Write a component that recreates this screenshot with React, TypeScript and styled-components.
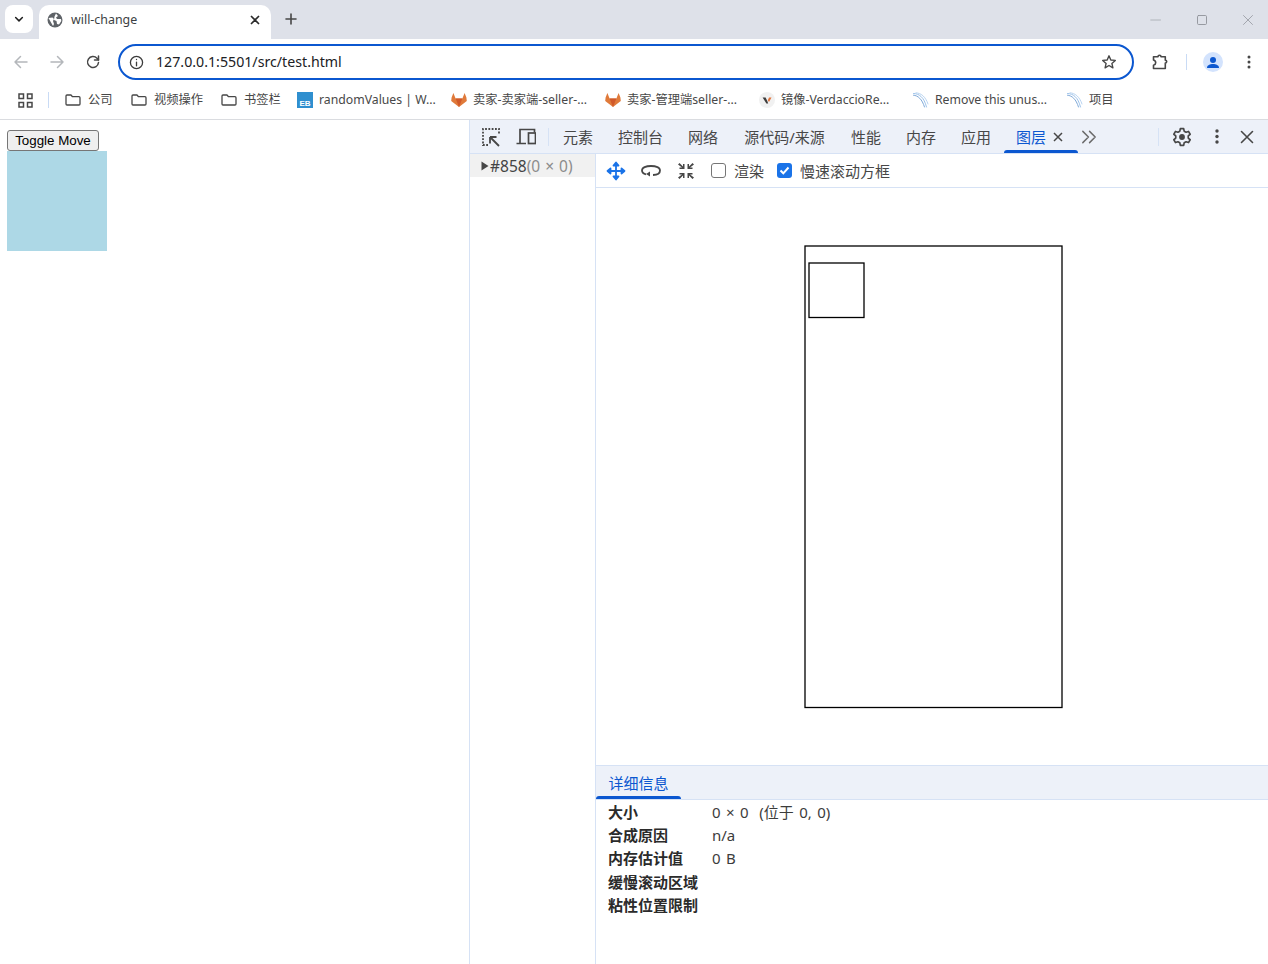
import styled, { createGlobalStyle } from "styled-components";
import { ReactNode } from "react";

const UI_FONT = `"Noto Sans", "Noto Sans CJK SC", sans-serif`;

const GlobalStyle = createGlobalStyle`
  html, body { margin: 0; padding: 0; background: #fff; }
  * { box-sizing: border-box; }
  body { font-family: ${UI_FONT}; overflow: hidden; }
`;

const Shell = styled.div`
  width: 1268px;
  height: 964px;
  display: flex;
  flex-direction: column;
  overflow: hidden;
`;

/* ---- tab strip ---- */
const TabStrip = styled.div`
  height: 39px;
  flex: none;
  background: #dee1e9;
  display: flex;
  align-items: flex-end;
  padding-left: 5px;
`;
const TabSearch = styled.div`
  width: 28px;
  height: 28px;
  margin-bottom: 6px;
  background: #fff;
  border-radius: 8px;
  display: flex;
  align-items: center;
  justify-content: center;
`;
const Tab = styled.div`
  width: 232px;
  height: 34px;
  margin-left: 6px;
  background: #fff;
  border-radius: 10px 10px 0 0;
  display: flex;
  align-items: center;
  padding: 0 9px 5px 8px;
  gap: 8px;
`;
const TabTitle = styled.span`
  flex: 1;
  font-size: 12.4px;
  line-height: 18px;
  color: #3c3f43;
`;
const NewTab = styled.div`
  width: 28px;
  height: 28px;
  margin: 0 0 6px 6px;
  display: flex;
  align-items: center;
  justify-content: center;
`;
const WindowControls = styled.div`
  margin-left: auto;
  margin-right: -3px;
  height: 39px;
  display: flex;
  align-items: center;
`;
const WindowButton = styled.div`
  width: 46px;
  height: 39px;
  display: flex;
  align-items: center;
  justify-content: center;
`;

/* ---- toolbar ---- */
const Toolbar = styled.div`
  height: 44px;
  flex: none;
  background: #fff;
  display: flex;
  align-items: center;
  padding: 2px 0 0 3px;
  border-radius: 8px 8px 0 0;
`;
const NavButton = styled.div<{ $w?: number }>`
  width: ${(p) => p.$w ?? 36}px;
  height: 36px;
  flex: none;
  display: flex;
  align-items: center;
  justify-content: center;
`;
const Omnibox = styled.div`
  width: 1016px;
  height: 36px;
  flex: none;
  margin-left: 7px;
  border: 2px solid #0b57d0;
  border-radius: 18px;
  display: flex;
  align-items: center;
  padding: 0 15px 0 9px;
`;
const UrlText = styled.span`
  flex: 1;
  margin-left: 12px;
  font-size: 14.2px;
  line-height: 20px;
  color: #202124;
`;
const ToolDivider = styled.div`
  width: 1px;
  height: 16px;
  flex: none;
  background: #c9dbf5;
  margin-right: 8px;
`;
const Avatar = styled.div`
  width: 20px;
  height: 20px;
  border-radius: 50%;
  background: #d3e3fd;
  display: flex;
  align-items: center;
  justify-content: center;
  overflow: hidden;
`;

/* ---- bookmarks ---- */
const BookmarkBar = styled.div`
  height: 37px;
  flex: none;
  background: #fff;
  border-bottom: 1px solid #dadce0;
  display: flex;
  align-items: center;
  padding: 0 0 2px 18px;
`;
const BarDivider = styled.div`
  width: 1px;
  height: 16px;
  background: #c9dbf5;
  margin: 0 16px 0 15px;
`;
const Bookmark = styled.div<{ $gap?: number; $w: number }>`
  width: ${(p) => p.$w}px;
  display: flex;
  align-items: center;
  gap: ${(p) => p.$gap ?? 6}px;
  flex: none;
`;
const BookmarkLabel = styled.span`
  font-size: 12.25px;
  line-height: 16px;
  color: #474747;
  white-space: nowrap;
`;
const EbIcon = styled.div`
  width: 16px;
  height: 16px;
  background: #2f8fcf;
  color: #fff;
  font: 700 8px/9px "Liberation Sans", sans-serif;
  display: flex;
  align-items: flex-end;
  justify-content: center;
`;

/* ---- content ---- */
const Content = styled.div`
  flex: 1;
  display: flex;
  min-height: 0;
`;
const Page = styled.div`
  width: 469px;
  flex: none;
  padding: 10px 7px;
  background: #fff;
`;
const ToggleButton = styled.button`
  display: block;
  width: 92px;
  height: 21px;
  padding: 0 0 1px;
  font: 13.33px/15px "Liberation Sans", Arial, sans-serif;
  color: #000;
  background: #efefef;
  border: 1px solid #767676;
  border-radius: 3px;
`;
const BlueBox = styled.div`
  width: 100px;
  height: 100px;
  background: lightblue;
`;

/* ---- devtools ---- */
const DevTools = styled.div`
  flex: 1;
  display: flex;
  flex-direction: column;
  border-left: 1px solid #d6e2f5;
  min-width: 0;
`;
const DevTabs = styled.div`
  height: 34px;
  flex: none;
  background: #edf1f9;
  border-bottom: 1px solid #d6e2f5;
  display: flex;
  align-items: center;
  padding-left: 3px;
`;
const DevIcon = styled.div<{ $w?: number }>`
  width: ${(p) => p.$w ?? 35}px;
  height: 33px;
  flex: none;
  display: flex;
  align-items: center;
  justify-content: center;
`;
const DevDivider = styled.div<{ $ml: number; $mr: number }>`
  width: 1px;
  height: 18px;
  flex: none;
  background: #d6e2f5;
  margin-left: ${(p) => p.$ml}px;
  margin-right: ${(p) => p.$mr}px;
`;
const DevTab = styled.div<{ $active?: boolean; $w?: number }>`
  position: relative;
  height: 33px;
  flex: none;
  width: ${(p) => (p.$w ? `${p.$w}px` : "auto")};
  padding: 0 12.5px;
  display: flex;
  align-items: center;
  justify-content: center;
  font-size: 15px;
  line-height: 20px;
  color: ${(p) => (p.$active ? "#0b57d0" : "#474747")};
  &::after {
    content: "";
    display: ${(p) => (p.$active ? "block" : "none")};
    position: absolute;
    left: 0;
    right: 0;
    bottom: 0;
    height: 3px;
    border-radius: 3px 3px 0 0;
    background: #0b57d0;
  }
`;
const TabClose = styled.span`
  display: flex;
  margin-left: 5px;
`;
const Panels = styled.div`
  flex: 1;
  display: flex;
  min-height: 0;
`;
const LayerTree = styled.div`
  width: 126px;
  flex: none;
  border-right: 1px solid #d6e2f5;
`;
const TreeRow = styled.div`
  height: 23px;
  background: #f1f1f1;
  display: flex;
  align-items: center;
  padding-left: 11px;
  font-size: 15.5px;
  line-height: 20px;
  color: #444;
  white-space: pre;
`;
const TreeArrow = styled.span`
  display: flex;
  margin-right: 1px;
`;
const TreeDim = styled.span`
  color: #8c8c8c;
  word-spacing: 1px;
`;
const LayerMain = styled.div`
  flex: 1;
  display: flex;
  flex-direction: column;
  min-width: 0;
`;
const LayerTools = styled.div`
  height: 34px;
  flex: none;
  border-bottom: 1px solid #d6e2f5;
  display: flex;
  align-items: center;
  padding-left: 2px;
`;
const ToolIcon = styled.div`
  width: 35px;
  height: 33px;
  flex: none;
  display: flex;
  align-items: center;
  justify-content: center;
`;
const CheckLabel = styled.label<{ $ml: number }>`
  display: flex;
  align-items: center;
  margin-left: ${(p) => p.$ml}px;
  gap: 8px;
  font-size: 15px;
  line-height: 20px;
  color: #474747;
`;
const CheckBox = styled.span<{ $on?: boolean }>`
  width: 15px;
  height: 15px;
  border-radius: 3px;
  border: ${(p) => (p.$on ? "none" : "1px solid #767676")};
  background: ${(p) => (p.$on ? "#1a73e8" : "#fff")};
  display: flex;
  align-items: center;
  justify-content: center;
`;
const Canvas = styled.div`
  flex: 1;
  display: flex;
  align-items: center;
  justify-content: center;
  padding-left: 3px;
  min-height: 0;
`;
const DetailTabs = styled.div`
  height: 35px;
  flex: none;
  background: #edf1f9;
  border-top: 1px solid #d6e2f5;
  border-bottom: 1px solid #d6e2f5;
  display: flex;
`;
const DetailTab = styled.div`
  position: relative;
  width: 85px;
  display: flex;
  align-items: center;
  justify-content: center;
  font-size: 15px;
  line-height: 20px;
  color: #0b57d0;
  &::after {
    content: "";
    position: absolute;
    left: 0;
    right: 0;
    bottom: 0;
    height: 3px;
    border-radius: 3px 3px 0 0;
    background: #0b57d0;
  }
`;
const DetailGrid = styled.div`
  height: 164px;
  flex: none;
  padding-left: 12px;
  display: grid;
  grid-template-columns: 104px 1fr;
  grid-auto-rows: 23.4px;
  align-items: center;
  font-size: 15px;
  line-height: 20px;
`;
const DetailKey = styled.div`
  font-weight: 700;
  color: #2b2b2b;
`;
const DetailValue = styled.div`
  color: #3c3c3c;
  white-space: pre;
  word-spacing: 1.5px;
`;

const Ico = ({ size = 16, children, sw = 1.5, color = "#474747" }: { size?: number; children: ReactNode; sw?: number; color?: string }) => (
  <svg width={size} height={size} viewBox="0 0 16 16" fill="none" stroke={color} strokeWidth={sw} strokeLinecap="round" strokeLinejoin="round">
    {children}
  </svg>
);

const FolderIcon = () => (
  <Ico size={16} sw={1.3}>
    <path d="M1 4a1 1 0 0 1 1-1h4l1.5 1.7H14a1 1 0 0 1 1 1V12a1 1 0 0 1-1 1H2a1 1 0 0 1-1-1z" />
  </Ico>
);

const FoxIcon = () => (
  <svg width="16" height="16" viewBox="0 0 16 16">
    <path d="M0.6 5.5 2.4 1 4.6 6.4H11.4L13.6 1 15.4 5.5 15.8 9 8 15 .2 9z" fill="#e07a3a" />
    <path d="M4.6 6.4H11.4L8 15z" fill="#d0592a" />
  </svg>
);

const WaveIcon = () => (
  <svg width="16" height="16" viewBox="0 0 16 16" fill="none" strokeLinecap="round">
    <path d="M0.5 1.5C6 1.5 11 5 13.5 15" stroke="#9cc2ea" strokeWidth="1" />
    <path d="M3 .8C8 1 12.5 4.5 15 12" stroke="#b9d4f1" strokeWidth="1" />
    <path d="M0.5 3.2C5 3.5 9 7 11.5 15" stroke="#7fa9d8" strokeWidth="1" />
  </svg>
);

const VerdaccioIcon = () => (
  <svg width="16" height="16" viewBox="0 0 16 16">
    <circle cx="8" cy="8" r="8" fill="#f1f1f1" />
    <path d="M3.6 5.5H6.6L8.3 9 9.2 11.5H7.4z" fill="#3c3c3c" />
    <path d="M8.8 8.2 10 5.5H12.5L10 10z" fill="#e2733a" />
  </svg>
);

const bookmarks = [
  { label: "公司", w: 66 },
  { label: "视频操作", w: 90 },
  { label: "书签栏", w: 76 },
];

const devTabs = [
  { label: "元素" },
  { label: "控制台" },
  { label: "网络" },
  { label: "源代码/来源", w: 108 },
  { label: "性能" },
  { label: "内存" },
  { label: "应用" },
];

const details: [string, string][] = [
  ["大小", "0 × 0  (位于 0, 0)"],
  ["合成原因", "n/a"],
  ["内存估计值", "0 B"],
  ["缓慢滚动区域", ""],
  ["粘性位置限制", ""],
];

function DetailRow({ name, value }: { name: string; value: string }) {
  return (
    <>
      <DetailKey>{name}</DetailKey>
      <DetailValue>{value}</DetailValue>
    </>
  );
}

export default function App() {
  return (
    <Shell>
      <GlobalStyle />
      <TabStrip>
        <TabSearch>
          <Ico size={12} sw={2} color="#1f1f1f">
            <path d="M3.5 6 8 10.5 12.5 6" />
          </Ico>
        </TabSearch>
        <Tab>
          <svg width="16" height="16" viewBox="0 0 16 16">
            <circle cx="8" cy="8" r="7.5" fill="#5f6368" />
            <path d="M1.5 6 5.5 5.5 7 7 6 9l1 3-1 2-2-3.5zM9 1.5 11 4 9 5.5 10 7h4l.3 2-2.3 3.5-2-.5-.5-3-2.5-1 .5-3.5z" fill="#fff" />
          </svg>
          <TabTitle>will-change</TabTitle>
          <Ico size={14} sw={2} color="#2b2b2b">
            <path d="M4 4l8 8M12 4l-8 8" />
          </Ico>
        </Tab>
        <NewTab>
          <Ico size={16} sw={1.6} color="#474747">
            <path d="M8 3v10M3 8h10" />
          </Ico>
        </NewTab>
        <WindowControls>
          <WindowButton>
            <Ico size={12} sw={1} color="#a2a5ab">
              <path d="M1 8h13" />
            </Ico>
          </WindowButton>
          <WindowButton>
            <Ico size={12} sw={1.2} color="#8f9299">
              <rect x="2" y="2" width="12" height="12" rx="1.5" />
            </Ico>
          </WindowButton>
          <WindowButton>
            <Ico size={12} sw={1} color="#8f9299">
              <path d="M2 2l12 12M14 2L2 14" />
            </Ico>
          </WindowButton>
        </WindowControls>
      </TabStrip>

      <Toolbar>
        <NavButton>
          <Ico sw={1.5} color="#b4b7bb">
            <path d="M14 8H2M7.5 2.5 2 8l5.5 5.5" />
          </Ico>
        </NavButton>
        <NavButton>
          <Ico sw={1.5} color="#b4b7bb">
            <path d="M2 8h12M8.5 2.5 14 8l-5.5 5.5" />
          </Ico>
        </NavButton>
        <NavButton>
          <Ico sw={1.5} color="#474747">
            <path d="M13.5 8.5a5.5 5.5 0 1 1-1.5-4.3L13.5 6" />
            <path d="M13.5 2v4h-4" />
          </Ico>
        </NavButton>
        <Omnibox>
          <Ico size={15} sw={1.4} color="#3c3c3c">
            <circle cx="8" cy="8" r="6.5" />
            <path d="M8 7.5V11.5M8 4.8v.1" />
          </Ico>
          <UrlText>127.0.0.1:5501/src/test.html</UrlText>
          <Ico size={16} sw={1.4} color="#474747">
            <path d="M8 1.8 9.8 6l4.5.4-3.4 3 1 4.4L8 11.5 4.1 13.8l1-4.4-3.4-3L6.2 6z" />
          </Ico>
        </Omnibox>
        <NavButton $w={52}>
          <svg width="16" height="16" viewBox="0 0 16 16" fill="none" stroke="#474747" strokeWidth="1.6" strokeLinejoin="round">
            <path d="M1.5 2.8H6a1.5 1.5 0 0 1 3 0h4.3V6.200a1.400 1.400 0 0 1 0 2.800v5.500H1.500V11.200c1.800-.5 2.200-1.300 2.200-2.500S3.300 6.500 1.500 6z" />
          </svg>
        </NavButton>
        <ToolDivider />
        <NavButton>
          <Avatar>
            <svg width="20" height="20" viewBox="0 0 20 20">
              <circle cx="10" cy="8" r="3" fill="#0b57d0" />
              <path d="M4 16c0-3 3-4 6-4s6 1 6 4z" fill="#0b57d0" />
            </svg>
          </Avatar>
        </NavButton>
        <NavButton>
          <svg width="4" height="14" viewBox="0 0 4 14">
            <circle cx="2" cy="2" r="1.5" fill="#474747" />
            <circle cx="2" cy="7" r="1.5" fill="#474747" />
            <circle cx="2" cy="12" r="1.5" fill="#474747" />
          </svg>
        </NavButton>
      </Toolbar>

      <BookmarkBar>
        <svg width="15" height="15" viewBox="0 0 15 15" fill="none" stroke="#474747" strokeWidth="1.5">
          <rect x="1" y="1" width="4.5" height="4.5" />
          <rect x="9.5" y="1" width="4.5" height="4.5" />
          <rect x="1" y="9.5" width="4.5" height="4.5" />
          <rect x="9.5" y="9.5" width="4.5" height="4.5" />
        </svg>
        <BarDivider />
        {bookmarks.map((b) => (
          <Bookmark key={b.label} $w={b.w} $gap={7}>
            <FolderIcon />
            <BookmarkLabel>{b.label}</BookmarkLabel>
          </Bookmark>
        ))}
        <Bookmark $w={154}>
          <EbIcon>EB</EbIcon>
          <BookmarkLabel>randomValues | W...</BookmarkLabel>
        </Bookmark>
        <Bookmark $w={154}>
          <FoxIcon />
          <BookmarkLabel>卖家-卖家端-seller-...</BookmarkLabel>
        </Bookmark>
        <Bookmark $w={154}>
          <FoxIcon />
          <BookmarkLabel>卖家-管理端seller-...</BookmarkLabel>
        </Bookmark>
        <Bookmark $w={154}>
          <VerdaccioIcon />
          <BookmarkLabel>镜像-VerdaccioRe...</BookmarkLabel>
        </Bookmark>
        <Bookmark $w={154}>
          <WaveIcon />
          <BookmarkLabel>Remove this unus...</BookmarkLabel>
        </Bookmark>
        <Bookmark $w={60}>
          <WaveIcon />
          <BookmarkLabel>项目</BookmarkLabel>
        </Bookmark>
      </BookmarkBar>

      <Content>
        <Page>
          <ToggleButton>Toggle Move</ToggleButton>
          <BlueBox />
        </Page>
        <DevTools>
          <DevTabs>
            <DevIcon>
              <svg width="20" height="20" viewBox="0 0 20 20" fill="none" stroke="#474747" strokeWidth="1.8">
                <path d="M7 18H2V2h16v6" strokeDasharray="1.8 1.5" />
                <path d="M9 10h6.5M9 10v6.5M9 10l9 9" />
              </svg>
            </DevIcon>
            <DevIcon>
              <svg width="20" height="20" viewBox="0 0 20 20" fill="none" stroke="#474747" strokeWidth="1.7">
                <path d="M.5 16.500H10M4 16.500V2.500H18.500V5.500" />
                <rect x="12.5" y="6" width="7" height="10.5" />
              </svg>
            </DevIcon>
            <DevDivider $ml={5} $mr={1.5} />
            {devTabs.map((t) => (
              <DevTab key={t.label} $w={t.w}>
                {t.label}
              </DevTab>
            ))}
            <DevTab $active>
              图层
              <TabClose>
                <svg width="14" height="14" viewBox="0 0 14 14" fill="none" stroke="#474747" strokeWidth="1.5">
                  <path d="M3 3l8 8M11 3l-8 8" />
                </svg>
              </TabClose>
            </DevTab>
            <DevIcon $w={22}>
              <Ico size={18} sw={1.3} color="#6b6b6b">
                <path d="M2.5 3 7.5 8l-5 5M8.5 3l5 5-5 5" />
              </Ico>
            </DevIcon>
            <DevDivider $ml={58} $mr={6} />
            <DevIcon>
              <svg width="20" height="20" viewBox="0 0 24 24" fill="none" stroke="#474747" strokeWidth="2" strokeLinejoin="round">
                <path d="M10 2h4l.6 3 2.3 1.3 2.9-1 2 3.4-2.3 2v2.600l2.300 2-2 3.400-2.900-1L14.600 19l-.6 3h-4l-.6-3-2.300-1.300-2.900 1-2-3.400 2.300-2v-2.600l-2.300-2 2-3.400 2.900 1L9.400 5z" />
                <circle cx="12" cy="12" r="3.5" fill="#474747" stroke="none" />
              </svg>
            </DevIcon>
            <DevIcon>
              <svg width="4" height="15" viewBox="0 0 4 15">
                <circle cx="2" cy="2" r="1.7" fill="#474747" />
                <circle cx="2" cy="7.5" r="1.7" fill="#474747" />
                <circle cx="2" cy="13" r="1.7" fill="#474747" />
              </svg>
            </DevIcon>
            <DevIcon $w={25}>
              <Ico size={16} sw={1.6} color="#474747">
                <path d="M2.5 2.5l11 11M13.5 2.5l-11 11" />
              </Ico>
            </DevIcon>
          </DevTabs>
          <Panels>
            <LayerTree>
              <TreeRow>
                <TreeArrow>
                  <svg width="8" height="10" viewBox="0 0 8 10">
                    <path d="M.5.5 7.5 5 .5 9.5z" fill="#474747" />
                  </svg>
                </TreeArrow>
                #858<TreeDim>(0 × 0)</TreeDim>
              </TreeRow>
            </LayerTree>
            <LayerMain>
              <LayerTools>
                <ToolIcon>
                  <svg width="20" height="20" viewBox="0 0 20 20" fill="none" stroke="#1a73e8" strokeWidth="1.8" strokeLinejoin="round">
                    <path d="M10 2v16M2 10h16" />
                    <path d="M7.5 4.5 10 1.5l2.5 3zM7.5 15.5 10 18.5l2.5-3zM4.5 7.5 1.5 10l3 2.5zM15.5 7.5 18.5 10l-3 2.5z" fill="#1a73e8" />
                  </svg>
                </ToolIcon>
                <ToolIcon>
                  <svg width="20" height="14" viewBox="0 0 20 14" fill="none" stroke="#474747" strokeWidth="1.8">
                    <path d="M12 11c4 0 7-1.5 7-4.5S15 2 10 2 1 3.500 1 6.500c0 2 1.500 3.200 4 3.800" />
                    <path d="M9 7.500v5l-4-2.500z" fill="#474747" stroke="none" />
                  </svg>
                </ToolIcon>
                <ToolIcon>
                  <svg width="18" height="18" viewBox="0 0 18 18" fill="#474747">
                    <path d="M1 2.500 2.500 1 6 4.500V2h1.500v5H2.500V5.500H5zM17 2.500 15.500 1 12 4.500V2h-1.500v5h5V5.500H13zM1 15.500 2.500 17 6 13.500V16h1.500v-5H2.500v1.500H5zM17 15.500 15.500 17 12 13.500V16h-1.500v-5h5v1.500H13z" />
                  </svg>
                </ToolIcon>
                <CheckLabel $ml={8}>
                  <CheckBox />
                  渲染
                </CheckLabel>
                <CheckLabel $ml={13}>
                  <CheckBox $on>
                    <svg width="11" height="11" viewBox="0 0 11 11" fill="none" stroke="#fff" strokeWidth="2">
                      <path d="M1.5 5.5 4.3 8.3 9.5 2.5" />
                    </svg>
                  </CheckBox>
                  慢速滚动方框
                </CheckLabel>
              </LayerTools>
              <Canvas>
                <svg width="259" height="464" viewBox="0 0 259 464" fill="none" stroke="#000" strokeWidth="1.3">
                  <rect x="1" y="1" width="257" height="461.5" />
                  <rect x="5" y="18" width="55" height="54.5" />
                </svg>
              </Canvas>
              <DetailTabs>
                <DetailTab>详细信息</DetailTab>
              </DetailTabs>
              <DetailGrid>
                {details.map(([k, v]) => (
                  <DetailRow key={k} name={k} value={v} />
                ))}
              </DetailGrid>
            </LayerMain>
          </Panels>
        </DevTools>
      </Content>
    </Shell>
  );
}
